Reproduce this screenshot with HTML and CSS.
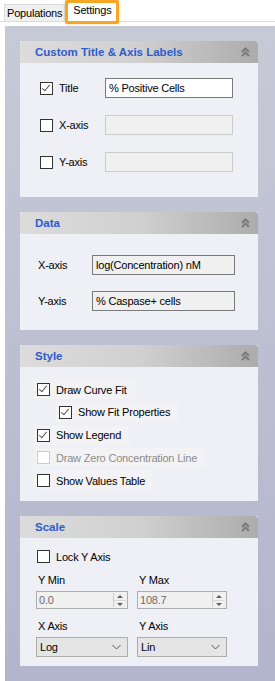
FILE: index.html
```html
<!DOCTYPE html>
<html lang="en">
<head>
    <meta charset="UTF-8">
    <title>Settings</title>
    <link rel="stylesheet" href="styles.css">
</head>
<body>

    <!-- Tabs -->
    <div class="tabs">
        <div class="tab">Populations</div>
        <div class="tab active">Settings</div>
    </div>

    <div class="panel">

        <!-- Custom Title & Axis Labels -->
        <div class="card">
            <div class="card-head">
                <span>Custom Title &amp; Axis Labels</span>
                <svg class="collapse" width="9" height="10" viewBox="0 0 9 10"><path d="M1 5 L4.5 1.5 L8 5 M1 9 L4.5 5.5 L8 9" fill="none" stroke="#7b7b7b" stroke-width="2"/></svg>
            </div>
            <div class="card-body labels">
                <div class="lrow">
                    <label class="chk"><span class="box on"></span>Title</label>
                    <div class="field">% Positive Cells</div>
                </div>
                <div class="lrow">
                    <label class="chk"><span class="box"></span>X-axis</label>
                    <div class="field off"></div>
                </div>
                <div class="lrow">
                    <label class="chk"><span class="box"></span>Y-axis</label>
                    <div class="field off"></div>
                </div>
            </div>
        </div>

        <!-- Data -->
        <div class="card">
            <div class="card-head">
                <span>Data</span>
                <svg class="collapse" width="9" height="10" viewBox="0 0 9 10"><path d="M1 5 L4.5 1.5 L8 5 M1 9 L4.5 5.5 L8 9" fill="none" stroke="#7b7b7b" stroke-width="2"/></svg>
            </div>
            <div class="card-body data">
                <div class="drow">
                    <span>X-axis</span>
                    <div class="field ro">log(Concentration) nM</div>
                </div>
                <div class="drow">
                    <span>Y-axis</span>
                    <div class="field ro">% Caspase+ cells</div>
                </div>
            </div>
        </div>

        <!-- Style -->
        <div class="card">
            <div class="card-head">
                <span>Style</span>
                <svg class="collapse" width="9" height="10" viewBox="0 0 9 10"><path d="M1 5 L4.5 1.5 L8 5 M1 9 L4.5 5.5 L8 9" fill="none" stroke="#7b7b7b" stroke-width="2"/></svg>
            </div>
            <div class="card-body style">
                <label class="chk opt"><span class="box on"></span>Draw Curve Fit</label>
                <label class="chk opt sub"><span class="box on"></span>Show Fit Properties</label>
                <label class="chk opt"><span class="box on"></span>Show Legend</label>
                <label class="chk opt dis"><span class="box"></span>Draw Zero Concentration Line</label>
                <label class="chk opt"><span class="box"></span>Show Values Table</label>
            </div>
        </div>

        <!-- Scale -->
        <div class="card">
            <div class="card-head">
                <span>Scale</span>
                <svg class="collapse" width="9" height="10" viewBox="0 0 9 10"><path d="M1 5 L4.5 1.5 L8 5 M1 9 L4.5 5.5 L8 9" fill="none" stroke="#7b7b7b" stroke-width="2"/></svg>
            </div>
            <div class="card-body scale">
                <label class="chk lock"><span class="box"></span>Lock Y Axis</label>
                <div class="grid">
                    <div>
                        <div class="cap">Y Min</div>
                        <div class="spin"><span>0.0</span><div class="arrows"><i class="up"></i><i class="down"></i></div></div>
                    </div>
                    <div>
                        <div class="cap">Y Max</div>
                        <div class="spin"><span>108.7</span><div class="arrows"><i class="up"></i><i class="down"></i></div></div>
                    </div>
                    <div>
                        <div class="cap">X Axis</div>
                        <div class="select"><span>Log</span><svg width="9" height="6" viewBox="0 0 9 6"><path d="M0.5 1 L4.5 5 L8.5 1" fill="none" stroke="#555" stroke-width="1"/></svg></div>
                    </div>
                    <div>
                        <div class="cap">Y Axis</div>
                        <div class="select"><span>Lin</span><svg width="9" height="6" viewBox="0 0 9 6"><path d="M0.5 1 L4.5 5 L8.5 1" fill="none" stroke="#555" stroke-width="1"/></svg></div>
                    </div>
                </div>
            </div>
        </div>

    </div>

</body>
</html>
```

FILE: styles.css
```css
body {
    margin: 0;
    font-family: "Liberation Sans", Arial, sans-serif;
    font-size: 11px;
    letter-spacing: -0.2px;
    color: #000;
    background: #fff;
    width: 275px;
    height: 681px;
    overflow: hidden;
}
.tabs {
    display: flex;
    align-items: flex-end;
    height: 21px;
    padding-left: 4px;
    border-bottom: 1px solid #dadada;
}
.tab {
    height: 16px;
    line-height: 16px;
    padding: 0 2px 0 2px;
    background: #f0f0f0;
    border: 1px solid #dadada;
    border-bottom: none;
    font-size: 11px;
}
.tab.active {
    position: relative;
    background: #fff;
    height: 18px;
    line-height: 15px;
    padding: 0 5px;
    border: 3px solid #f6a623;
    border-radius: 2px;
    margin-bottom: -3px;
    box-shadow: 0 0 3px rgba(246, 166, 35, 0.4);
}
.panel {
    margin: 4px 0 0 5px;
    height: 655px;
    padding: 15px 0 0 15px;
    box-sizing: border-box;
    background: linear-gradient(#c6cad7, #b3b5cc);
}
.card {
    width: 238px;
    margin-bottom: 15px;
    background: #eef0f5;
}
.card-head {
    height: 22px;
    display: flex;
    align-items: center;
    justify-content: space-between;
    padding: 0 8px 0 15px;
    border-radius: 3px 3px 0 0;
    background: linear-gradient(to right, #dcdcdc, #d0d0d0 50%, #acacac);
    font-size: 11.5px;
    font-weight: bold;
    letter-spacing: 0;
    color: #2d5ccf;
}
.collapse {
    display: block;
}
.card-body {
    box-sizing: border-box;
}
.chk {
    display: flex;
    align-items: center;
}
.box {
    width: 11px;
    height: 11px;
    border: 1px solid #333;
    background: #fff;
    margin-right: 6px;
    flex: none;
    position: relative;
}
.box.on::after {
    content: "";
    position: absolute;
    left: 3px;
    top: 0px;
    width: 3px;
    height: 7px;
    border: solid #555;
    border-width: 0 1px 1px 0;
    transform: rotate(40deg);
}

/* custom labels */
.labels {
    height: 134px;
    padding: 15px 0 0 20px;
}
.lrow {
    display: flex;
    align-items: center;
    height: 20px;
    margin-bottom: 17px;
}
.lrow .chk {
    width: 65px;
}
.field {
    box-sizing: border-box;
    width: 128px;
    height: 20px;
    line-height: 18px;
    padding-left: 3px;
    background: #fff;
    border: 1px solid #7a7a7a;
    white-space: nowrap;
}
.field.off {
    background: #f0f0f0;
    border-color: #cccccc;
}

/* data */
.data {
    height: 96px;
    padding: 21px 0 0 18px;
}
.drow {
    display: flex;
    align-items: center;
    height: 20px;
    margin-bottom: 16px;
}
.drow span {
    width: 54px;
}
.field.ro {
    width: 143px;
    background: #f0f0f0;
}

/* style */
.style {
    height: 134px;
    padding: 13px 0 0 14px;
}
.opt {
    display: flex;
    width: max-content;
    height: 19px;
    padding: 0 8px 0 3px;
    margin-bottom: 3.75px;
    background: #f3f3f5;
}
.opt.sub {
    margin-left: 22px;
}
.opt.dis {
    color: #8c8c8c;
}
.opt.dis .box {
    border-color: #cccccc;
}

/* scale */
.scale {
    height: 128px;
    padding: 12px 0 0 16px;
}
.lock {
    height: 13px;
    margin-left: 1px;
}
.grid {
    display: grid;
    grid-template-columns: 92px 90px;
    column-gap: 9px;
    row-gap: 9px;
    margin-top: 9px;
}
.cap {
    height: 16px;
    line-height: 16px;
    margin: 0 0 3px 2px;
}
.spin {
    box-sizing: border-box;
    height: 18px;
    display: flex;
    justify-content: space-between;
    align-items: center;
    padding-left: 2px;
    background: #f0f0f0;
    border: 1px solid #adadad;
    color: #6d6d6d;
}
.arrows {
    display: flex;
    flex-direction: column;
    width: 12px;
    height: 14px;
    margin-right: 1px;
    border-left: 1px solid #cfcfcf;
}
.arrows i {
    flex: 1;
    position: relative;
}
.arrows i.up {
    border-bottom: 1px solid #d8d8d8;
}
.arrows i::after {
    content: "";
    position: absolute;
    left: 3px;
    border-left: 3px solid transparent;
    border-right: 3px solid transparent;
}
.arrows i.up::after {
    top: 2px;
    border-bottom: 3px solid #606060;
}
.arrows i.down::after {
    top: 2px;
    border-top: 3px solid #606060;
}
.select {
    box-sizing: border-box;
    height: 20px;
    display: flex;
    justify-content: space-between;
    align-items: center;
    padding: 0 6px 0 3px;
    background: #e5e5e5;
    border: 1px solid #adadad;
}
.select svg {
    display: block;
}
```
